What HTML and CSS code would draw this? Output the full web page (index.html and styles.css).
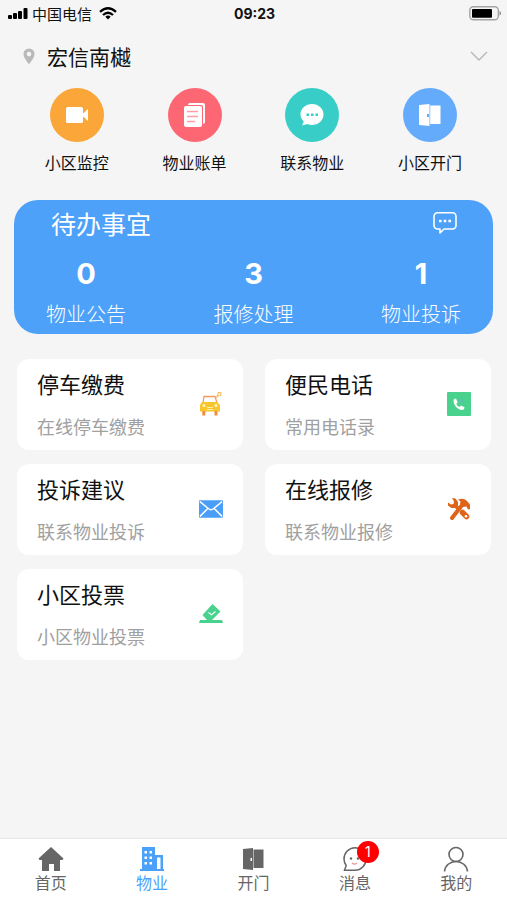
FILE: index.html
```html
<!DOCTYPE html>
<html lang="zh-CN">
<head>
<meta charset="utf-8">
<meta name="viewport" content="width=device-width, initial-scale=1">
<title>物业</title>
<link rel="stylesheet" href="styles.css">
</head>
<body>
<div class="status">
  <div class="status-left">
    <svg width="20" height="12" viewBox="0 0 20 12"><rect x="0" y="7" width="4" height="4" rx="1"/><rect x="5" y="5" width="4" height="6" rx="1"/><rect x="10" y="3" width="4" height="8" rx="1"/><rect x="15.500" y="0" width="4" height="11" rx="1"/></svg>
    <span>中国电信</span>
    <svg class="wifi" width="18" height="13" viewBox="0 0 18 13"><g fill="none" stroke="#000" stroke-width="2.300"><path d="M1 4.800Q9-2.200 17 4.800"/><path d="M4 8Q9 3.600 14 8"/></g><path d="M6.300 9.700Q9 7.300 11.700 9.700L9 12.500z"/></svg>
  </div>
  <time class="clock">09:23</time>
  <svg class="battery" width="32" height="15" viewBox="0 0 32 15"><rect x=".8" y=".8" width="28.500" height="13" rx="3.500" fill="none" stroke="#a5a5a5" stroke-width="1.400"/><rect x="3" y="3" width="20" height="8.800" rx="1"/><path d="M30.500 5v4.500q1.500-.5 1.500-2.200t-1.500-2.300z" fill="#888"/></svg>
</div>

<button class="place" type="button">
  <svg width="12" height="17" viewBox="0 0 12 17"><path fill="#b9b9b9" fill-rule="evenodd" d="M6 .5A5.500 5.500 0 0 0 .5 6C.5 9.500 4 13.500 6 16.200 8 13.500 11.500 9.500 11.500 6A5.500 5.500 0 0 0 6 .5zM6 3.800a2.300 2.300 0 1 1 0 4.600 2.300 2.300 0 0 1 0-4.600z"/></svg>
  <span class="place-name">宏信南樾</span>
  <svg width="18" height="11" viewBox="0 0 18 11"><path d="M1 1l8 8 8-8" fill="none" stroke="#b8b8b8" stroke-width="1.400"/></svg>
</button>

<main>
  <nav class="quick" aria-label="快捷服务">
    <a href="#monitor"><span class="disc orange"><svg width="24" height="24" viewBox="0 0 24 24" fill="#fff"><rect x="1" y="4" width="17" height="16" rx="1.500"/><path d="M16.500 12l6.500-6v12z"/></svg></span>小区监控</a>
    <a href="#bill"><span class="disc red"><svg width="24" height="26" viewBox="0 0 24 26"><path d="M7 1h13a2 2 0 0 1 2 2v17a2 2 0 0 1-2 2V5a2 2 0 0 0-2-2H5a2 2 0 0 1 2-2z" fill="#fff"/><rect x="1" y="4" width="18" height="21" rx="2" fill="#fff"/><path d="M4 9.500h11M4 14.500h11M4 19.500h8" stroke="#ff9ca5" stroke-width="1.300"/></svg></span>物业账单</a>
    <a href="#contact"><span class="disc teal"><svg width="24" height="24" viewBox="0 0 24 24"><path d="M12 1c6.300 0 11.500 4.600 11.500 10.500S18.300 22 12 22c-1.700 0-3.300-.3-4.700-.9L2 22.500l1.800-4C1.700 16.600.5 14.200.5 11.500.5 5.600 5.700 1 12 1z" fill="#fff"/><path d="M6.500 10.500h2.500v2.500H6.500zM11 10.500h2.500v2.500H11zM15.500 10.500H18v2.500h-2.500z" fill="#38cdc6"/></svg></span>联系物业</a>
    <a href="#door"><span class="disc blue"><svg width="22" height="22" viewBox="0 0 22 22" fill="#fff"><path d="M0 1l10.500-1v22L0 21z"/><path d="M11.200 1.500H21.500v18.500H11.200z"/><rect x="8" y="10" width="2" height="3" fill="#65abfb"/></svg></span>小区开门</a>
  </nav>

  <section class="todo">
    <div class="todo-head">
      <h2>待办事宜</h2>
      <button type="button" aria-label="消息"><svg width="24" height="24" viewBox="0 0 24 24" fill="none" stroke="#fff" stroke-width="1.600" stroke-linejoin="round"><path d="M4.500 1.800h15a3.500 3.500 0 0 1 3.500 3.500v9.200a3.500 3.500 0 0 1-3.500 3.500H11l-4 4v-4H4.500A3.500 3.500 0 0 1 1 14.500V5.300a3.500 3.500 0 0 1 3.500-3.500z"/><path d="M6 10h2.600M10.700 10h2.600M15.400 10H18" stroke-width="2.600"/></svg></button>
    </div>
    <dl class="stats">
      <div><dd>0</dd><dt>物业公告</dt></div>
      <div><dd>3</dd><dt>报修处理</dt></div>
      <div><dd>1</dd><dt>物业投诉</dt></div>
    </dl>
  </section>

  <section class="cards">
    <a class="card" href="#parking">
      <span class="card-text"><strong>停车缴费</strong><small>在线停车缴费</small></span>
      <svg width="24" height="26" viewBox="0 0 24 26"><path d="M4 12l1-6.500h11L18 12" fill="none" stroke="#f79b5c" stroke-width="1.300"/><path d="M3 11h15l3 3v6.500H1V14z" fill="#f8c52d"/><path d="M3.300 20h3v4.500h-3zM15.500 20h3v4.500h-3z" fill="#f48b3e"/><circle cx="5" cy="14.500" r="1.500" fill="#fff3bf"/><circle cx="17" cy="14.500" r="1.500" fill="#fff3bf"/><path d="M8 16.500h6M8 18.500h6" stroke="#fff0a8"/><path d="M17.500 7l2-5.500 2.500.5-.5 2.500-2.500.5" fill="none" stroke="#f7bd62" stroke-width="1.200"/></svg>
    </a>
    <a class="card" href="#phone">
      <span class="card-text"><strong>便民电话</strong><small>常用电话录</small></span>
      <svg width="24" height="24" viewBox="0 0 24 24"><rect width="24" height="24" rx="1" fill="#48d28d"/><path d="M7 7l2-.5 1.700 4-1.500 1.200q1 2.300 3.300 3.300l1.500-1.500 3.500 1.800-.5 2q-2 1.500-5 0-3.500-1.800-5-5.500Q6 8.500 7 7z" fill="#fff"/><path d="M13 7.500h4v4h-1.200a3 3 0 0 0-2.800-2.800z" fill="#5fbbb5"/></svg>
    </a>
    <a class="card" href="#suggest">
      <span class="card-text"><strong>投诉建议</strong><small>联系物业投诉</small></span>
      <svg width="24" height="20" viewBox="0 0 26 20"><rect x="0" y=".5" width="26" height="19" rx="1" fill="#4a9ef8"/><path d="M1 2l9 7.500q3 2.500 6 0L25 2M1 18l8.500-8.500M25 18l-8.500-8.500" fill="none" stroke="#fff" stroke-width="1.600"/></svg>
    </a>
    <a class="card" href="#repair">
      <span class="card-text"><strong>在线报修</strong><small>联系物业报修</small></span>
      <svg width="24" height="24" viewBox="0 0 24 24"><path d="M5 21L15.500 7.500" fill="none" stroke="#df6419" stroke-width="4" stroke-linecap="round"/><path d="M11 2.500Q16.500.5 19.500 3.500L23 7.500V12l-2 .5-1.500-3-3.500.5-3-3 .5-2.500z" fill="#df6419"/><path d="M5 1l3.500.5L11 5v3.500l2 2-2.500 3L8 11 4.500 11 1 8.500 1 5.500l3 2 2.500-.5.500-2.500z" fill="#df6419"/><path d="M15.500 15.500l4 4" fill="none" stroke="#df6419" stroke-width="5.500" stroke-linecap="round"/><circle cx="19" cy="19.300" r="1.300" fill="#fff"/></svg>
    </a>
    <a class="card" href="#vote">
      <span class="card-text"><strong>小区投票</strong><small>小区物业投票</small></span>
      <svg width="24" height="20" viewBox="0 0 24 20"><path d="M13.500 0l8 7.500-8.500 8.500H8L3.500 11z" fill="#48d28d"/><path d="M9.500 8.500l3 2.300 4-3.300" fill="none" stroke="#fff" stroke-width="1.100"/><path d="M1 16h22l1 3H0z" fill="#48d28d"/></svg>
    </a>
  </section>
</main>

<nav class="tabs" aria-label="主导航">
  <a href="#home"><svg width="26" height="26" viewBox="0 0 26 26"><path d="M13 1l12.500 11.500-1 1.500H22v11h-6v-7h-5v7H4V14H1.500l-1-1.500z" fill="#666"/></svg>首页</a>
  <a class="active" href="#property" aria-current="page"><svg width="26" height="26" viewBox="0 0 26 26"><path fill="#4ba1fa" fill-rule="evenodd" d="M3 1h13v8h8v14h1v2H1v-2h2zM5.500 5v2.500H8V5zm5 0v2.500H13V5zm-5 5.500V13H8v-2.500zm5 0V13H13v-2.500zm-5 5.500v2.500H8V16zm5 0v2.500H13V16zM18 11.500V23h3.500V11.500z"/></svg>物业</a>
  <a href="#open"><svg width="26" height="26" viewBox="0 0 26 26"><path d="M3 3l10-1v22L3 23zM13.500 3.500h10V22h-10z" fill="#666"/><rect x="10.500" y="12" width="1.500" height="3" fill="#fff"/></svg>开门</a>
  <a href="#messages"><span class="badge-wrap"><svg width="26" height="26" viewBox="0 0 26 26"><path d="M13 1.800c6 0 11 5 11 11.200s-5 11.200-11 11.200H2.500l1.700-4.700C2.700 17.600 2 15.500 2 13 2 6.800 7 1.800 13 1.800z" fill="none" stroke="#666" stroke-width="1.500"/><circle cx="9" cy="12.500" r="1.200" fill="#666"/><circle cx="16" cy="12.500" r="1.200" fill="#666"/><path d="M10 17q2.500 2.500 5 0" fill="none" stroke="#e29b91" stroke-width="1.200"/></svg><b class="badge">1</b></span>消息</a>
  <a href="#me"><svg width="26" height="26" viewBox="0 0 26 26" fill="none" stroke="#666" stroke-width="1.600"><circle cx="13" cy="8.500" r="7"/><path d="M1.500 25.500C2 19.500 7 15.500 13 15.500S24 19.500 24.500 25.500"/></svg>我的</a>
</nav>
</body>
</html>
```
FILE: styles.css
```css
* { box-sizing: border-box; }

body {
  margin: 0;
  min-height: 100vh;
  display: flex;
  flex-direction: column;
  background: #f5f5f5;
  color: #111;
  font-family: "Noto Sans CJK SC", sans-serif;
}

a { color: inherit; text-decoration: none; }
svg { display: block; flex: none; }

button {
  padding: 0;
  border: 0;
  background: none;
  color: inherit;
  font: inherit;
}

.status {
  display: grid;
  grid-template-columns: 1fr auto 1fr;
  align-items: center;
  height: 27px;
  padding: 0 6px 0 8px;
}

.status-left {
  display: flex;
  align-items: center;
  gap: 4px;
  font-size: 15px;
  line-height: 20px;
}

.wifi { margin-left: 3px; }

.clock {
  font: 700 14px/20px Inter, sans-serif;
}

.battery { justify-self: end; }

.place {
  display: flex;
  align-items: center;
  gap: 12px;
  padding: 15px 19px 18px 23px;
  text-align: left;
}

.place-name {
  flex: 1;
  font-size: 21px;
  line-height: 28px;
}

main { flex: 1; }

.quick {
  display: grid;
  grid-template-columns: repeat(4, 1fr);
  padding: 0 18px;
}

.quick a {
  display: flex;
  flex-direction: column;
  align-items: center;
  gap: 8px;
  font-size: 16px;
  line-height: 24px;
}

.disc {
  display: grid;
  place-items: center;
  width: 54px;
  height: 54px;
  border-radius: 50%;
}

.orange { background: #faa638; }
.red { background: #fd6773; }
.teal { background: #38cdc6; }
.blue { background: #65abfb; }

.todo {
  margin: 26px 14px 25px;
  padding: 7px 32px;
  border-radius: 24px;
  background: #4ea1f8;
  color: #fff;
}

.todo-head {
  display: flex;
  justify-content: space-between;
  align-items: center;
  padding: 0 4px 0 5px;
}

.todo-head h2 {
  margin: 0;
  font-size: 25px;
  font-weight: 400;
  line-height: 32px;
}

.stats {
  display: flex;
  justify-content: space-between;
  margin: 17px 0 0;
}

.stats div {
  display: flex;
  flex-direction: column;
  align-items: center;
  gap: 9px;
}

.stats dd {
  margin: 0;
  font: 700 29px/36px Inter, sans-serif;
}

.stats dt {
  font-size: 20px;
  font-weight: 300;
  line-height: 26px;
}

.cards {
  display: grid;
  grid-template-columns: 1fr 1fr;
  gap: 14px 22px;
  padding: 0 16px 24px 17px;
}

.card {
  display: flex;
  justify-content: space-between;
  align-items: center;
  padding: 8px 20px 10px;
  border-radius: 12px;
  background: #fff;
}

.card-text {
  display: flex;
  flex-direction: column;
  gap: 14px;
}

.card strong {
  font-size: 22px;
  font-weight: 400;
  line-height: 32px;
}

.card small {
  color: #a0a0a0;
  font-size: 18px;
  line-height: 27px;
}

.tabs {
  position: sticky;
  bottom: 0;
  display: grid;
  grid-template-columns: repeat(5, 1fr);
  padding: 7px 0 8px;
  border-top: 1px solid #e6e6e6;
  background: #fff;
}

.tabs a {
  display: flex;
  flex-direction: column;
  align-items: center;
  color: #666;
  font-size: 16px;
  line-height: 20px;
}

.tabs .active { color: #4ba1fa; }

.badge-wrap { position: relative; }

.badge {
  position: absolute;
  top: -5px;
  right: -11px;
  width: 22px;
  height: 22px;
  border-radius: 50%;
  background: #f00;
  color: #fff;
  font: 400 14px/22px Inter, sans-serif;
  text-align: center;
}
```
